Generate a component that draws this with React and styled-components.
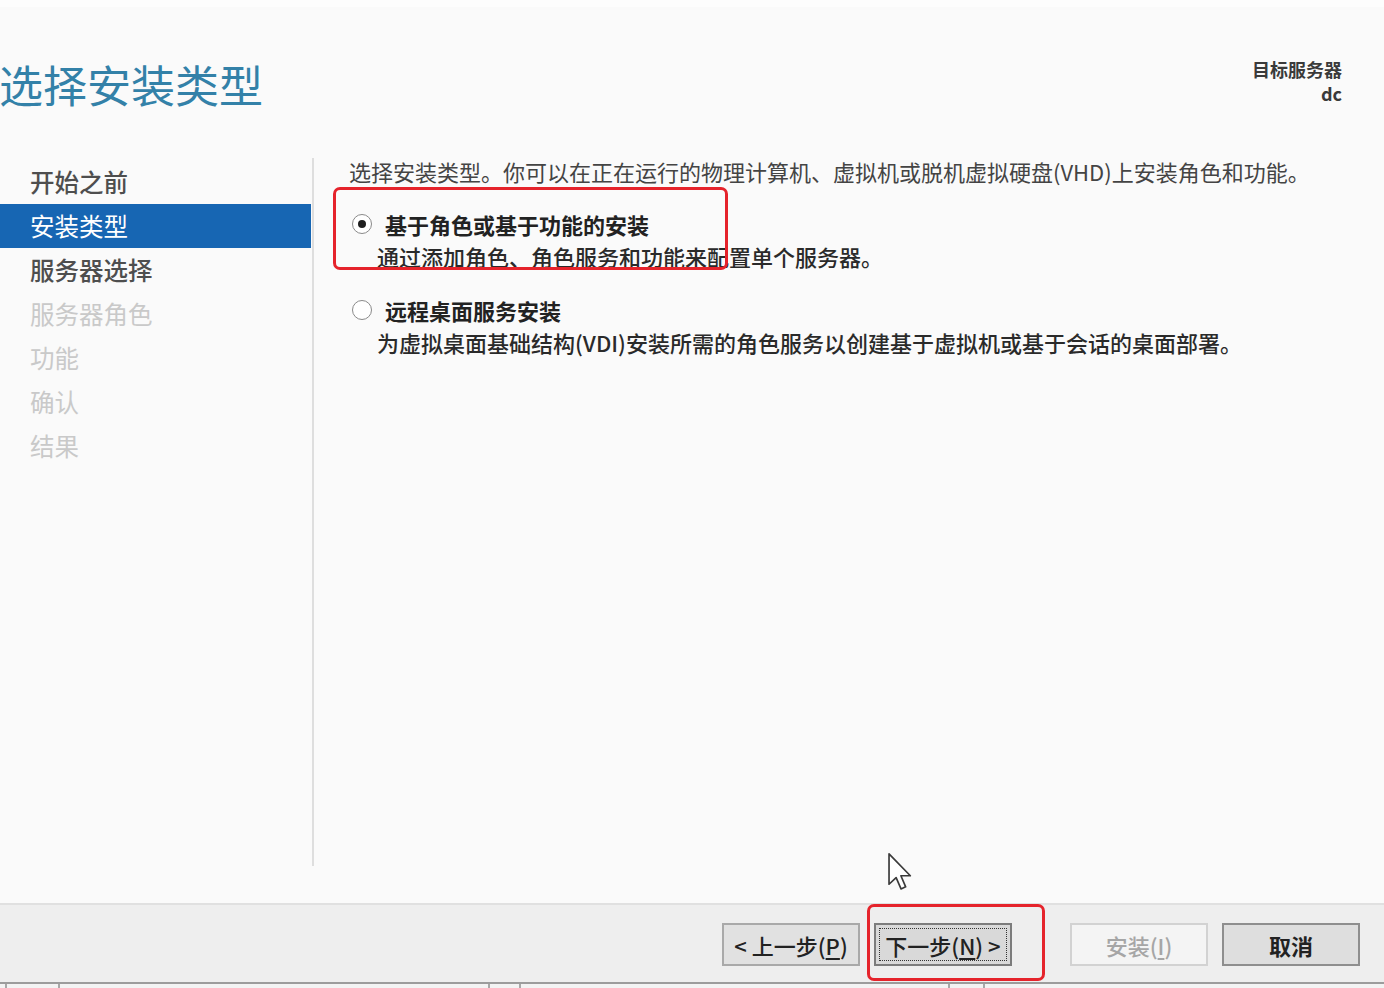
import React from 'react';
import styled, { createGlobalStyle } from 'styled-components';

const GlobalStyle = createGlobalStyle`
    html, body {
        margin: 0;
        padding: 0;
        background: #fafafa;
    }
    body {
        font-family: "Noto Sans CJK SC", "Liberation Sans", sans-serif;
    }
`;

const steps = [
    { label: '开始之前', state: 'done' },
    { label: '安装类型', state: 'active' },
    { label: '服务器选择', state: 'done' },
    { label: '服务器角色', state: 'off' },
    { label: '功能', state: 'off' },
    { label: '确认', state: 'off' },
    { label: '结果', state: 'off' },
];

const options = [
    {
        title: '基于角色或基于功能的安装',
        desc: '通过添加角色、角色服务和功能来配置单个服务器。',
        checked: true,
    },
    {
        title: '远程桌面服务安装',
        desc: '为虚拟桌面基础结构(VDI)安装所需的角色服务以创建基于虚拟机或基于会话的桌面部署。',
        checked: false,
    },
];

const App = () => {
    return (
        <>
            <GlobalStyle />
            <Wizard>
                <Header>
                    <Title>选择安装类型</Title>
                    <Target>
                        <div>目标服务器</div>
                        <div>dc</div>
                    </Target>
                </Header>

                <Body>
                    <Sidebar>
                        {steps.map((s) => (
                            <NavItem key={s.label} $state={s.state}>
                                {s.label}
                            </NavItem>
                        ))}
                    </Sidebar>
                    <Divider />
                    <Content>
                        <Intro>
                            选择安装类型。你可以在正在运行的物理计算机、虚拟机或脱机虚拟硬盘(VHD)上安装角色和功能。
                        </Intro>
                        {options.map((o) => (
                            <Option key={o.title}>
                                <OptionHead>
                                    <Radio $checked={o.checked} />
                                    <OptionTitle>{o.title}</OptionTitle>
                                </OptionHead>
                                <OptionDesc>{o.desc}</OptionDesc>
                            </Option>
                        ))}
                    </Content>
                </Body>

                <Footer>
                    <Button>
                        &lt; 上一步(<u>P</u>)
                    </Button>
                    <Button $variant="default">
                        <Focus>
                            下一步(<u>N</u>) &gt;
                        </Focus>
                    </Button>
                    <Button $variant="disabled" $gap={58}>
                        安装(<u>I</u>)
                    </Button>
                    <Button $variant="cancel">取消</Button>
                </Footer>

                <BottomStrip>
                    <Segment $w={7} />
                    <Segment $w={53} />
                    <Segment $w={430} />
                    <Segment $w={31} />
                    <Segment $w={429} />
                    <Segment $w={35} />
                    <Segment $w={399} $last />
                </BottomStrip>

                {/* annotation boxes drawn over the dialog */}
                <Highlight $left={333} $top={187} $w={395} $h={83} />
                <Highlight $left={867} $top={904} $w={178} $h={77} />

                <Cursor width="26" height="40" viewBox="0 0 20 31">
                    <path
                        d="M1.5 1.5 L1.5 25 L7 19.8 L10.8 28.6 L14.4 27 L10.7 18.4 L18 18.4 Z"
                        fill="#fff"
                        stroke="#3a3a3a"
                        strokeWidth="1.3"
                        strokeLinejoin="round"
                    />
                </Cursor>
            </Wizard>
        </>
    );
};

const Wizard = styled.div`
    position: relative;
    width: 1384px;
    height: 988px;
    overflow: hidden;
    display: flex;
    flex-direction: column;
    background: #fafafa;
    border-top: 7px solid #fdfdfd;
    box-sizing: border-box;
`;

const Header = styled.div`
    height: 143px;
    display: flex;
    justify-content: space-between;
    align-items: flex-start;
    padding-right: 42px;
    flex-shrink: 0;
`;

const Title = styled.h1`
    margin: 51px 0 0 -1px;
    font-size: 44px;
    line-height: 52px;
    font-weight: 400;
    color: #3381a8;
`;

const Target = styled.div`
    margin-top: 50px;
    text-align: right;
    font-size: 18px;
    line-height: 24px;
    font-weight: 700;
    color: #3a3a3a;
`;

const Body = styled.div`
    flex: 1;
    display: flex;
    min-height: 0;
`;

const Sidebar = styled.nav`
    width: 311px;
    padding-top: 10px;
    flex-shrink: 0;
`;

const navColors = {
    done: '#4e4e4e',
    active: '#fff',
    off: '#c9c9c9',
};

const NavItem = styled.div`
    height: 44px;
    line-height: 44px;
    padding-left: 30px;
    font-size: 24.5px;
    font-weight: ${(p) => (p.$state === 'done' ? 500 : 400)};
    color: ${(p) => navColors[p.$state]};
    background: ${(p) => (p.$state === 'active' ? '#1766b3' : 'transparent')};
`;

const Divider = styled.div`
    width: 2px;
    margin: 8px 0 37px 1px;
    background: #dedede;
    flex-shrink: 0;
`;

const Content = styled.div`
    flex: 1;
    padding: 7px 0 0 35px;
    color: #3a3a3a;
`;

const Intro = styled.p`
    margin: 0;
    font-size: 22px;
    line-height: 28px;
    color: #444;
    white-space: nowrap;
`;

const Option = styled.div`
    margin-top: 24px;
`;

const OptionHead = styled.div`
    display: flex;
    align-items: center;
    height: 30px;
    padding-left: 3px;
    gap: 13px;
`;

const Radio = styled.span`
    width: 18px;
    height: 18px;
    border-radius: 50%;
    border: 1.5px solid #8a8a8a;
    background: #fff;
    display: flex;
    align-items: center;
    justify-content: center;
    flex-shrink: 0;
    &::after {
        content: '';
        width: 8px;
        height: 8px;
        border-radius: 50%;
        background: #1e1e1e;
        display: ${(p) => (p.$checked ? 'block' : 'none')};
    }
`;

const OptionTitle = styled.span`
    font-size: 22px;
    font-weight: 700;
    color: #222;
`;

const OptionDesc = styled.div`
    margin-top: 2px;
    padding-left: 28px;
    font-size: 22px;
    line-height: 30px;
    font-weight: 500;
    color: #2a2a2a;
    white-space: nowrap;
`;

const Footer = styled.div`
    height: 79px;
    flex-shrink: 0;
    box-sizing: border-box;
    border-top: 2px solid #e0e0e0;
    background: #eeeeee;
    display: flex;
    justify-content: flex-end;
    align-items: flex-start;
    padding: 18px 24px 0 0;
`;

const buttonLook = {
    normal: { bg: '#e1e1e1', border: '#a9a9a9', color: '#222' },
    default: { bg: '#d9d9d9', border: '#7c7c7c', color: '#222' },
    disabled: { bg: '#f4f4f4', border: '#d2d2d2', color: '#a6a6a6' },
    cancel: { bg: '#dedede', border: '#8e8e8e', color: '#222' },
};

const Button = styled.button`
    width: 138px;
    height: 43px;
    margin-left: ${(p) => (p.$gap ? p.$gap : 14)}px;
    padding: 3px;
    box-sizing: border-box;
    border: 2px solid ${(p) => buttonLook[p.$variant || 'normal'].border};
    background: ${(p) => buttonLook[p.$variant || 'normal'].bg};
    color: ${(p) => buttonLook[p.$variant || 'normal'].color};
    font-family: inherit;
    font-size: 22px;
    font-weight: ${(p) => (p.$variant === 'cancel' ? 700 : 500)};
    display: flex;
    align-items: center;
    justify-content: center;
    white-space: nowrap;
    u {
        text-underline-offset: 3px;
    }
`;

const Focus = styled.span`
    width: 100%;
    height: 100%;
    box-sizing: border-box;
    border: 1px dotted #333;
    display: flex;
    align-items: center;
    justify-content: center;
`;

const BottomStrip = styled.div`
    height: 6px;
    flex-shrink: 0;
    box-sizing: border-box;
    display: flex;
    border-top: 2px solid #9c9c9c;
    background: #f3f3f3;
`;

const Segment = styled.div`
    width: ${(p) => p.$w}px;
    flex-shrink: 0;
    flex-grow: ${(p) => (p.$last ? 1 : 0)};
    border-right: ${(p) => (p.$last ? 'none' : '2px solid #a8a8a8')};
    box-sizing: border-box;
`;

const Highlight = styled.div`
    position: absolute;
    left: ${(p) => p.$left}px;
    top: ${(p) => p.$top - 7}px;
    width: ${(p) => p.$w}px;
    height: ${(p) => p.$h}px;
    box-sizing: border-box;
    border: 3px solid #e5232b;
    border-radius: 7px;
    pointer-events: none;
`;

const Cursor = styled.svg`
    position: absolute;
    left: 887px;
    top: 845px;
`;

export default App;
